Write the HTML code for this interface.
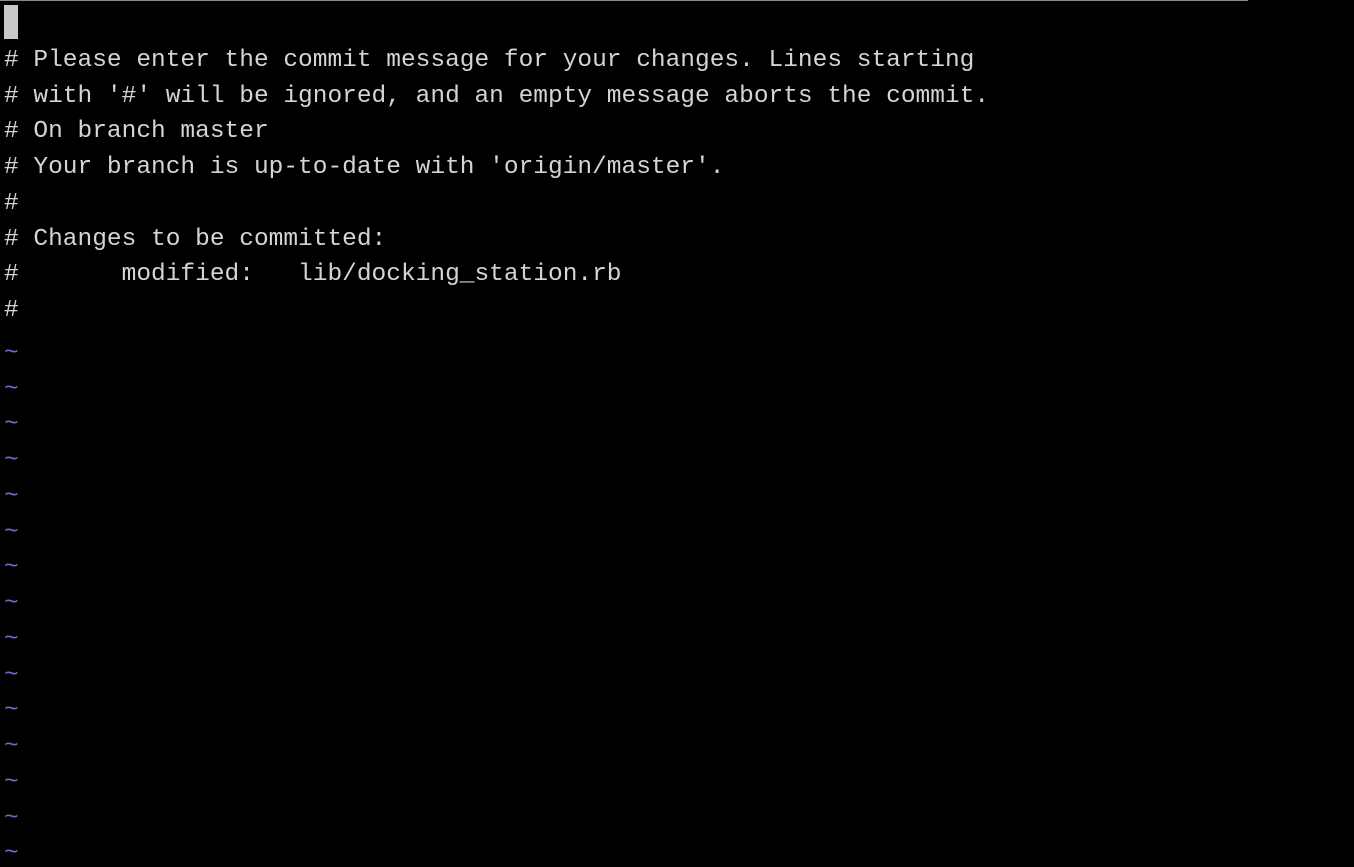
<!DOCTYPE html>
<html><head><style>
html,body{margin:0;padding:0;background:#000;width:1354px;height:860px;overflow:hidden}
.top{position:absolute;left:0;top:0;width:1248px;height:1px;background:#8a8a8a}
.c{position:absolute;left:4px;top:5px;width:14px;height:34px;background:#c8c8c8}
pre{position:absolute;left:4px;top:7px;margin:0;font-family:"Liberation Mono",monospace;font-size:24.5px;line-height:35.75px;color:#d4d4d4;white-space:pre}
.t{color:#6b6bd0;position:relative;top:7px}
</style></head><body>
<div class="top"></div>
<div class="c"></div>
<pre> 
# Please enter the commit message for your changes. Lines starting
# with '#' will be ignored, and an empty message aborts the commit.
# On branch master
# Your branch is up-to-date with 'origin/master'.
#
# Changes to be committed:
#       modified:   lib/docking_station.rb
#
<span class="t">~
~
~
~
~
~
~
~
~
~
~
~
~
~
~</span></pre>
</body></html>
